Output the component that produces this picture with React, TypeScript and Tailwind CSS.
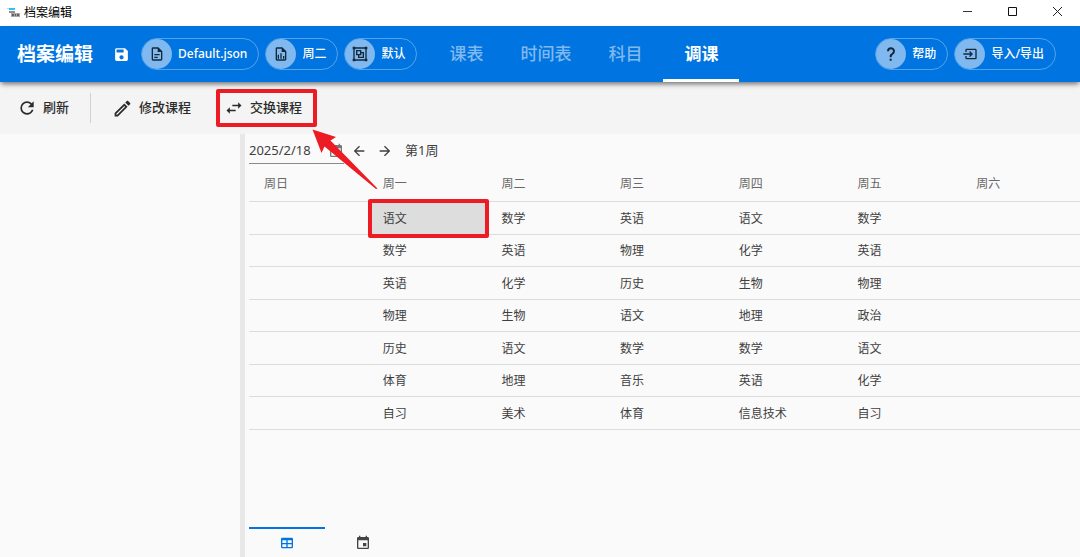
import { useState } from "react";
import clsx from "clsx";

const icons = {
    save: "M15,9H5V5H15M12,19A3,3 0 0,1 9,16A3,3 0 0,1 12,13A3,3 0 0,1 15,16A3,3 0 0,1 12,19M17,3H5C3.89,3 3,3.9 3,5V19A2,2 0 0,0 5,21H19A2,2 0 0,0 21,19V7L17,3Z",
    file: "M6,2A2,2 0 0,0 4,4V20A2,2 0 0,0 6,22H18A2,2 0 0,0 20,20V8L14,2H6M6,4H13V9H18V20H6V4M8,12V14H16V12H8M8,16V18H13V16H8Z",
    chart: "M6 2C4.89 2 4 2.9 4 4V20C4 21.11 4.89 22 6 22H18C19.11 22 20 21.11 20 20V8L14 2H6M6 4H13V9H18V20H6V4M9 13V19H7V13H9M15 15V19H17V15H15M11 11V19H13V11H11Z",
    group: "M1,1V5H2V19H1V23H5V22H19V23H23V19H22V5H23V1H19V2H5V1M5,4H19V5H20V19H19V20H5V19H4V5H5M6,6V14H9V18H18V9H14V6M8,8H12V12H8M14,11H16V16H11V14H14",
    help: "M10,19H13V22H10V19M12,2C17.35,2.22 19.68,7.62 16.5,11.67C15.67,12.67 14.33,13.33 13.67,14.17C13,15 13,16 13,17H10C10,15.33 10,13.92 10.67,12.92C11.33,11.92 12.67,11.33 13.5,10.67C15.92,8.43 15.32,5.26 12,5A3,3 0 0,0 9,8H6A6,6 0 0,1 12,2Z",
    transfer: "M20,4H7C5.89,4 5,4.89 5,6V9H7V6H20V18H7V15H5V18A2,2 0 0,0 7,20H20A2,2 0 0,0 22,18V6C22,4.89 21.1,4 20,4M10.58,15.08L12,16.5L16.5,12L12,7.5L10.58,8.91L12.67,11H2V13H12.67L10.58,15.08Z",
    refresh: "M17.65,6.35C16.2,4.9 14.21,4 12,4A8,8 0 0,0 4,12A8,8 0 0,0 12,20C15.73,20 18.84,17.45 19.73,14H17.65C16.83,16.33 14.61,18 12,18A6,6 0 0,1 6,12A6,6 0 0,1 12,6C13.66,6 15.14,6.69 16.22,7.78L13,11H20V4L17.65,6.35Z",
    pencil: "M14.06,9L15,9.94L5.92,19H5V18.08L14.06,9M17.66,3C17.41,3 17.15,3.1 16.96,3.29L15.13,5.12L18.88,8.87L20.71,7.04C21.1,6.65 21.1,6 20.71,5.63L18.37,3.29C18.17,3.09 17.92,3 17.66,3M14.06,6.19L3,17.25V21H6.75L17.81,9.94L14.06,6.19Z",
    swap: "M21,9L17,5V8H10V10H17V13M7,11L3,15L7,19V16H14V14H7V11Z",
    calendar: "M19,19H5V8H19M16,1V3H8V1H6V3H5C3.89,3 3,3.89 3,5V19A2,2 0 0,0 5,21H19A2,2 0 0,0 21,19V5C21,3.89 20.1,3 19,3H18V1M17,12H12V17H17V12Z",
    table: "M5,4H19A2,2 0 0,1 21,6V18A2,2 0 0,1 19,20H5A2,2 0 0,1 3,18V6A2,2 0 0,1 5,4M5,8V12H11V8H5M13,8V12H19V8H13M5,14V18H11V14H5M13,14V18H19V14H13Z",
    left: "M20,11V13H8L13.5,18.5L12.08,19.92L4.16,12L12.08,4.08L13.5,5.5L8,11H20Z",
    right: "M4,11V13H16L10.5,18.5L11.92,19.92L19.84,12L11.92,4.08L10.5,5.5L16,11H4Z",
};

type IconName = keyof typeof icons;

const tabs = ["课表", "时间表", "科目", "调课"];
const weekdays = ["周日", "周一", "周二", "周三", "周四", "周五", "周六"];
const lessons = [
    ["", "语文", "数学", "英语", "语文", "数学", ""],
    ["", "数学", "英语", "物理", "化学", "英语", ""],
    ["", "英语", "化学", "历史", "生物", "物理", ""],
    ["", "物理", "生物", "语文", "地理", "政治", ""],
    ["", "历史", "语文", "数学", "数学", "语文", ""],
    ["", "体育", "地理", "音乐", "英语", "化学", ""],
    ["", "自习", "美术", "体育", "信息技术", "自习", ""],
];

function Icon({ name, size }: { name: IconName; size: number }) {
    return (
        <svg width={size} height={size} viewBox="0 0 24 24" fill="currentColor" className="shrink-0" aria-hidden="true">
            <path d={icons[name]} />
        </svg>
    );
}

function Chip({ icon, label }: { icon: IconName; label: string }) {
    return (
        <button className="flex h-8 items-center rounded-full border border-[#54a3ea] pr-[11px] text-[12px] font-medium text-white">
            <span className="mr-[6px] flex size-[30px] items-center justify-center rounded-full bg-[#80b9ef] text-[#15283a]">
                <Icon name={icon} size={16} />
            </span>
            {label}
        </button>
    );
}

function TitleBar() {
    return (
        <div className="flex h-[26px] items-center bg-white pl-[7px] text-[12px] text-black">
            <svg width="13" height="12" viewBox="0 0 13 12" aria-hidden="true">
                <path d="M0 1h2v1H0z" fill="#c9c9c9" />
                <path d="M2 1h6v2H2z" fill="#25c5ec" />
                <path d="M2 4h6v2H2z" fill="#8f8f8f" />
                <path d="M4 6h9v4H4z" fill="#a9a9a9" />
                <path d="M5 7h2v2H5zM8 7h1v2H8zM10 7h2v2h-2z" fill="#5f5f5f" />
            </svg>
            <span className="ml-1">档案编辑</span>
            <div className="ml-auto flex h-full items-center pb-1">
                <button aria-label="最小化" className="flex w-[45px] justify-center">
                    <svg width="11" height="11" viewBox="0 0 11 11"><path d="M1 5.5h9" stroke="#333" /></svg>
                </button>
                <button aria-label="最大化" className="flex w-[45px] justify-center">
                    <svg width="11" height="11" viewBox="0 0 11 11"><path d="M1.5 1.5h8v8h-8z" stroke="#111" fill="none" /></svg>
                </button>
                <button aria-label="关闭" className="flex w-[45px] justify-center">
                    <svg width="11" height="11" viewBox="0 0 11 11"><path d="M1 1l9 9M10 1l-9 9" stroke="#222" /></svg>
                </button>
            </div>
        </div>
    );
}

function Header() {
    const [active, setActive] = useState("调课");

    return (
        <header className="relative z-10 flex h-14 items-center bg-[#0074e0] pr-6 pl-[17px] shadow-[0_3px_5px_-1px_rgba(0,0,0,0.55)]">
            <h1 className="text-[19px] font-bold text-white">档案编辑</h1>
            <button aria-label="保存" className="mr-[11px] ml-5 text-white">
                <Icon name="save" size={17} />
            </button>
            <div className="flex gap-[6px]">
                <Chip icon="file" label="Default.json" />
                <Chip icon="chart" label="周二" />
                <Chip icon="group" label="默认" />
            </div>
            <nav className="ml-[11px] flex self-stretch">
                {tabs.map((tab) => (
                    <button
                        key={tab}
                        onClick={() => setActive(tab)}
                        className={clsx(
                            "min-w-[76px] border-b-3 px-4 pt-[3px] text-[17px]",
                            active === tab ? "border-white font-bold text-white" : "border-transparent font-medium text-[#80b9ef]"
                        )}
                    >
                        {tab}
                    </button>
                ))}
            </nav>
            <div className="ml-auto flex gap-[6px]">
                <Chip icon="help" label="帮助" />
                <Chip icon="transfer" label="导入/导出" />
            </div>
        </header>
    );
}

function Toolbar() {
    return (
        <div className="flex h-13 items-center bg-[#f4f4f4] pl-[17px] text-[13px] font-medium text-[#2b2b2b]">
            <button className="flex items-center gap-[6px]">
                <Icon name="refresh" size={20} />
                刷新
            </button>
            <div className="mx-[21px] h-[30px] w-px bg-[#d2d2d2]" />
            <button className="flex items-center gap-[6px]">
                <Icon name="pencil" size={21} />
                修改课程
            </button>
            <button className="relative ml-[25px] flex h-[38px] w-[101px] items-center gap-[6px] rounded-xs border-4 border-[#ed1c24] pl-1">
                <Icon name="swap" size={20} />
                交换课程
                {/* 指引箭头:从选中的课程指向交换按钮 */}
                <svg width="66" height="62" viewBox="0 0 66 62" className="pointer-events-none absolute top-9 left-[92px] z-20" aria-hidden="true">
                    <path d="M0.5 0.5L24 8L18.5 11.5L65.5 59.5L64 60L12.5 17.5L9.5 24Z" fill="#ed1c24" />
                </svg>
            </button>
        </div>
    );
}

function Schedule() {
    return (
        <table className="w-full table-fixed border-collapse text-[12px] text-[#3f3f3f]">
            <thead>
                <tr className="h-[37px] border-b border-[#dcdcdc] text-[#686868]">
                    {weekdays.map((day) => (
                        <th key={day} className="pt-1 pl-[15px] text-left font-normal">{day}</th>
                    ))}
                </tr>
            </thead>
            <tbody>
                {lessons.map((row, i) => (
                    <tr key={i} className="border-b border-[#dcdcdc] odd:h-[33px] even:h-[32px]">
                        {row.map((lesson, j) => {
                            const selected = i === 0 && j === 1;
                            return (
                                <td key={j} className={clsx("relative pt-0.5 pl-[15px]", selected && "bg-[#dddddd]")}>
                                    {lesson}
                                    {selected && (
                                        <div className="absolute -top-[3px] -right-[3px] -bottom-1 left-0 rounded-xs border-4 border-[#ed1c24]" />
                                    )}
                                </td>
                            );
                        })}
                    </tr>
                ))}
            </tbody>
        </table>
    );
}

export default function App() {
    return (
        <div className="flex min-h-screen flex-col bg-[#fafafa] font-['Noto_Sans','Noto_Sans_CJK_SC',sans-serif]">
            <TitleBar />
            <Header />
            <Toolbar />
            <main className="flex flex-1">
                <aside className="w-60" />
                <div className="mr-1 w-[5px] bg-[#e8e8e8]" />
                <section className="flex min-w-0 flex-1 flex-col">
                    <div className="flex h-[30px] items-center text-[13px] text-[#3f3f3f]">
                        <div className="flex h-full w-[95px] items-center justify-between border-b border-[#8a8a8a] pt-1 text-[#777]">
                            <input aria-label="日期" defaultValue="2025/2/18" className="w-[72px] bg-transparent text-[#3f3f3f] outline-none" />
                            <Icon name="calendar" size={16} />
                        </div>
                        <div className="flex items-center pt-[3px]">
                            <button aria-label="上一周" className="ml-[7px]">
                                <Icon name="left" size={16} />
                            </button>
                            <button aria-label="下一周" className="mr-3 ml-[10px]">
                                <Icon name="right" size={16} />
                            </button>
                            第1周
                        </div>
                    </div>
                    <Schedule />
                    <div className="mt-auto flex h-[30px]">
                        <button aria-label="表格视图" className="flex w-[76px] items-center justify-center border-t-2 border-[#0074e0] text-[#0074e0]">
                            <Icon name="table" size={16} />
                        </button>
                        <button aria-label="日历视图" className="flex w-[76px] items-center justify-center border-t-2 border-transparent text-[#444]">
                            <Icon name="calendar" size={16} />
                        </button>
                    </div>
                </section>
            </main>
        </div>
    );
}
